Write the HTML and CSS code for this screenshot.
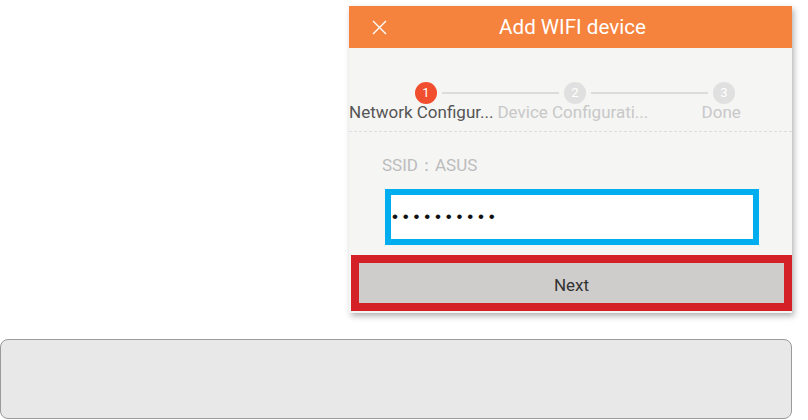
FILE: index.html
```html
<!doctype html>
<html lang="en">
  <head>
    <meta charset="UTF-8" />
    <title>Add WIFI device</title>
    <link rel="stylesheet" href="styles.css">
  </head>
  <body>
    <div class="stage">
      <div class="phone">
        <header class="bar">
          <svg class="close" width="15" height="15" viewBox="0 0 15 15">
            <path d="M1 1 L14 14 M14 1 L1 14" stroke="#fff" stroke-width="1.4" fill="none" />
          </svg>
          <h1>Add WIFI device</h1>
        </header>

        <div class="steps">
          <div class="track">
            <span class="dot active">1</span>
            <span class="line"></span>
            <span class="dot">2</span>
            <span class="line"></span>
            <span class="dot">3</span>
          </div>
          <div class="labels">
            <span class="current">Network Configur...</span>
            <span>Device Configurati...</span>
            <span>Done</span>
          </div>
        </div>

        <div class="form">
          <div class="ssid">SSID：ASUS</div>
          <div class="pwd">
            <div class="field">••••••••••</div>
          </div>
          <button class="next">Next</button>
        </div>
      </div>
    </div>

    <div class="note"></div>
  </body>
</html>
```

FILE: styles.css
```css
body {
  margin: 0;
  background: #fff;
  font-family: Roboto, "Liberation Sans", sans-serif;
}
.stage {
  display: flex;
  justify-content: flex-end;
  padding: 6px 16px 0 0;
}
.phone {
  width: 443px;
  background: #f5f5f4;
  padding-bottom: 2px;
  box-shadow: 2px 3px 6px rgba(0, 0, 0, 0.3);
}
.bar {
  height: 42px;
  background: #f5823d;
  display: grid;
  grid-template-columns: 60px 1fr 60px;
  align-items: center;
}
.close {
  margin-left: 23px;
}
.bar h1 {
  margin: 0;
  padding-left: 4px;
  color: #fff;
  font-size: 20.6px;
  font-weight: 400;
  text-align: center;
}
.steps {
  height: 84px;
  border-bottom: 1px dashed #dedede;
  box-sizing: border-box;
  padding-top: 34px;
}
.track {
  display: flex;
  align-items: center;
  padding: 0 57px 0 66px;
}
.dot {
  width: 22px;
  height: 22px;
  border-radius: 50%;
  background: #e0e0e0;
  color: #fff;
  font-size: 13px;
  line-height: 22px;
  text-align: center;
  flex: none;
}
.dot.active {
  background: #f04e2e;
}
.line {
  flex: 1;
  height: 2px;
  background: #dcdcdc;
  margin: 0 5px;
}
.labels {
  display: grid;
  grid-template-columns: repeat(3, 1fr);
  margin-top: -2px;
  font-size: 17px;
  line-height: 20px;
  color: #c8c8c8;
  text-align: center;
  white-space: nowrap;
}
.labels .current {
  color: #555;
  margin-right: 4px;
}
.labels span:last-child {
  margin-left: 2px;
}
.form {
  display: flex;
  flex-direction: column;
  align-items: flex-start;
}
.ssid {
  margin: 23px 0 0 33px;
  font-size: 17px;
  line-height: 20px;
  color: #bcbcbc;
}
.pwd {
  margin: 14px 0 0 36px;
  width: 374px;
  height: 56px;
  box-sizing: border-box;
  border: 6px solid #00aeef;
  background: #fff;
  display: flex;
  align-items: center;
}
.field {
  padding-left: 1px;
  font-family: "Liberation Sans", sans-serif;
  font-size: 17px;
  letter-spacing: 4.8px;
  color: #111;
}
.next {
  margin: 10px 0 0 2px;
  width: 441px;
  height: 56px;
  box-sizing: border-box;
  border: 8px solid #d42027;
  background: #cfcdcb;
  font-family: Roboto, sans-serif;
  font-size: 17px;
  color: #333;
  padding: 4px 0 0;
}
.note {
  margin-top: 26px;
  width: 792px;
  height: 80px;
  box-sizing: border-box;
  background: #e8e8e8;
  border: 1px solid #9a9a9a;
  border-radius: 8px;
}
```
